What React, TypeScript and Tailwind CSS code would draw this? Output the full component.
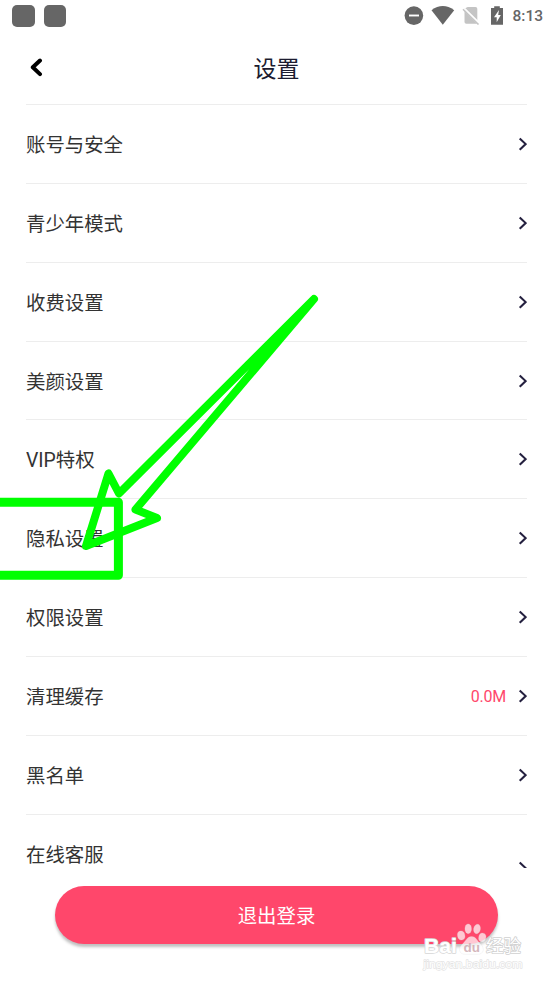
import React from 'react';

const rows = [
  { id: 'account', label: '账号与安全' },
  { id: 'teen', label: '青少年模式' },
  { id: 'charge', label: '收费设置' },
  { id: 'beauty', label: '美颜设置' },
  { id: 'vip', label: 'VIP特权' },
  { id: 'privacy', label: '隐私设置' },
  { id: 'permission', label: '权限设置' },
  { id: 'cache', label: '清理缓存', value: '0.0M' },
  { id: 'blacklist', label: '黑名单' },
];

const Chevron = () => (
  <svg width="9" height="14" viewBox="0 0 9 14" fill="none" stroke="#24203f" strokeWidth="2.1">
    <path d="M1.700 1.400 7.700 7.100 1.700 12.800" />
  </svg>
);

const StatusBar = () => (
  <div className="flex h-8 shrink-0 items-center pb-px pl-3 pr-[10px]">
    <div className="flex gap-[9px]">
      <div className="h-[22px] w-[22.5px] rounded-[5px] bg-[#666]" />
      <div className="h-[22px] w-[22.5px] rounded-[5px] bg-[#666]" />
    </div>
    <div className="ml-auto flex items-center">
      <svg className="-mt-px" width="99" height="20" viewBox="404 5 99 20">
        <circle cx="413.900" cy="15.600" r="9.300" fill="#666" />
        <path d="M409 15.500h10" stroke="#fff" strokeWidth="1.9" />
        <path d="M431.500 10.200Q442.800 2 454.200 10.200L442.800 24.800z" fill="#666" />
        <path d="M467.800 7H475.500a1.800 1.800 0 0 1 1.800 1.800V21L464.500 8.500zM464.500 11 477 23.800H466.300a1.800 1.800 0 0 1-1.800-1.800z" fill="#c4c4c4" />
        <path d="M464.700 8.400 479.500 23" stroke="#fff" strokeWidth="1.3" />
        <path d="M463 9.200 478.500 24.500" stroke="#c4c4c4" strokeWidth="1.6" />
        <path d="M494.200 6.200h5.600v1.900h3.200v16.700h-12V8.100h3.200z" fill="#666" />
        <path d="M499 10 494 17.200h2.700v5l4.100-7.200h-2.600z" fill="#fff" />
      </svg>
      <span className="ml-[9px] mt-px text-[15.5px] font-medium leading-5 text-[#666]">8:13</span>
    </div>
  </div>
);

const Watermark = () => (
  <svg className="absolute left-[420px] top-[915px]" width="110" height="60" viewBox="420 915 110 60">
    <g fill="#fff" fillOpacity="0.7" stroke="#d8d8d8" strokeOpacity="0.4" strokeWidth="0.6">
      <ellipse cx="461.200" cy="935.500" rx="3.700" ry="4.500" transform="rotate(-12 461.200 935.500)" />
      <ellipse cx="468.200" cy="928.800" rx="3.300" ry="4.900" />
      <ellipse cx="477" cy="929" rx="3.400" ry="4.800" transform="rotate(12 477 929)" />
      <ellipse cx="482.300" cy="937.500" rx="3.600" ry="4.400" transform="rotate(12 482.300 937.500)" />
      <path d="M471.500 936.500c5 0 6 5 9.500 8 4 4 2.500 9.800-3 9.800h-13c-6 0-7-6-3-9.800 3.500-3 5-8 9.500-8z" />
    </g>
    <g fill="#fff" strokeLinejoin="round" paintOrder="stroke" fontFamily="Liberation Sans, Noto Sans CJK SC, sans-serif">
      <text x="424" y="953" fontSize="20.500" fontWeight="700" textLength="33" lengthAdjust="spacingAndGlyphs" stroke="#d6d6d6" strokeWidth="1.500">Bai</text>
      <text x="463.500" y="952" fontSize="13.500" fontWeight="700" textLength="16.500" fill="#c9a3aa" fillOpacity="0.8">du</text>
      <text x="486" y="952" fontSize="17.500" fontWeight="400" textLength="35" stroke="#d0d0d0" strokeWidth="1.600">经验</text>
      <text x="423.500" y="967.500" fontSize="11.800" textLength="99" lengthAdjust="spacingAndGlyphs" stroke="#e3e3e3" strokeWidth="1.300">jingyan.baidu.com</text>
    </g>
  </svg>
);

export default function App() {
  return (
    <div className="relative flex h-[983px] w-[553px] flex-col overflow-hidden bg-white font-[Roboto,'Noto_Sans_CJK_SC',sans-serif]">
      <StatusBar />

      <header className="grid h-[72px] shrink-0 grid-cols-3 items-center px-[26px]">
        <svg width="20" height="20" viewBox="0 0 20 20" fill="none" stroke="#000" strokeWidth="4" strokeLinecap="round" strokeLinejoin="round">
          <path d="M14 2.500 6.800 9.300 14 16.100" />
        </svg>
        <h1 className="pt-1 text-center text-[23px] leading-8 text-[#1c1c30]">设置</h1>
      </header>

      <main className="mx-[26px] h-[764px] shrink-0 overflow-hidden text-[19.4px] text-[#333]">
        {rows.map((row) => (
          <div key={row.id} className="flex h-[78.86px] items-center border-t border-[#ededed]">
            <span className="pt-1 leading-7">{row.label}</span>
            <div className="ml-auto flex items-center gap-3">
              {row.value && <span className="pt-0.5 text-base leading-6 tracking-[-0.2px] text-[#ff476b]">{row.value}</span>}
              <Chevron />
            </div>
          </div>
        ))}
        <div className="flex h-[107px] items-center border-t border-[#ededed]">
          <span className="mb-[24px] leading-7">在线客服</span>
          <div className="ml-auto">
            <Chevron />
          </div>
        </div>
      </main>

      <button className="mx-[55px] mt-[18px] h-[58px] shrink-0 rounded-full bg-[#ff476b] pt-[3px] text-[19.4px] text-white shadow-[0_3px_3px_rgba(0,0,0,0.25)]">
        退出登录
      </button>

      {/* Hướng dẫn: khung và mũi tên */}
      <svg className="pointer-events-none absolute inset-0" width="553" height="983" fill="none" stroke="#00ff00" strokeLinejoin="round" strokeLinecap="round">
        <path d="M-10 502.200H118.400V575.200H-10" strokeWidth="9" />
        <path d="M314 299 119 493.500 108.500 473.500 86 546 157 518 135.500 509.500z" strokeWidth="8" />
      </svg>

      <Watermark />
    </div>
  );
}
